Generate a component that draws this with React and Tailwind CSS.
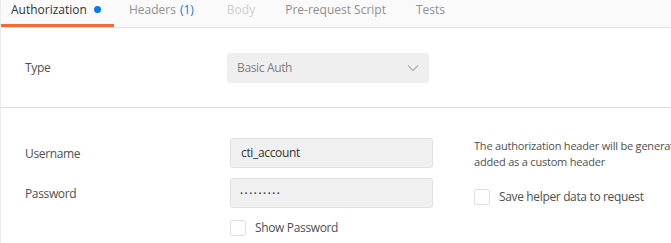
import React from 'react';

const font = { fontFamily: '"Open Sans", "Liberation Sans", sans-serif' };

const Tabs = () => (
    <div className="flex h-[28px] bg-[#fafafa] border-b border-[#e2e2e2] text-[12px]">
        <div className="relative flex items-start gap-[7px] pt-[1px] pl-[10px] pr-[13px] text-[#333333]">
            <span>Authorization</span>
            <span className="mt-[5px] w-[7px] h-[7px] rounded-full bg-[#097bed]" />
            <span className="absolute left-0 right-0 bottom-0 h-[3px] bg-[#f26b3a]" />
        </div>
        <div className="flex items-start gap-[4px] pt-[1px] px-[15px] text-[#909090]">
            <span>Headers</span>
            <span className="text-[#097bed]">(1)</span>
        </div>
        <div className="flex items-start pt-[1px] px-[15px] ml-[3px] text-[#cfcfcf]">Body</div>
        <div className="flex items-start pt-[1px] px-[15px] text-[#909090]">Pre-request Script</div>
        <div className="flex items-start pt-[1px] px-[15px] text-[#909090]">Tests</div>
    </div>
);

const Checkbox = ({ label }) => (
    <label className="flex items-center gap-[9px] text-[12px] tracking-[-0.35px] text-[#505050]">
        <span className="w-[16px] h-[16px] rounded-[2px] border border-[#e0e0e0] bg-white" />
        {label}
    </label>
);

const App = () => {
    return (
        <div className="w-[671px] h-[243px] bg-white overflow-hidden border-l border-[#ececec]" style={font}>
            <Tabs />

            {/* Type */}
            <div className="flex items-center h-[80px] border-b border-[#dcdcdc] pl-[24px]">
                <div className="w-[202px] text-[12px] tracking-[-0.35px] text-[#505050]">Type</div>
                <div className="flex items-center justify-between w-[202px] h-[30px] rounded-[3px] bg-[#efefef] pl-[10px] pr-[10px] text-[12px] tracking-[-0.35px] text-[#808080]">
                    <span>Basic Auth</span>
                    <svg width="12" height="8" viewBox="0 0 12 8" fill="none">
                        <path d="M1 1.5L6 6.5L11 1.5" stroke="#b0b0b0" strokeWidth="1.2" />
                    </svg>
                </div>
            </div>

            {/* Credentials */}
            <div className="flex pt-[30px] pl-[24px]">
                <div className="flex flex-col">
                    <div className="flex items-center h-[30px]">
                        <div className="w-[205px] pt-[2px] text-[12px] tracking-[-0.35px] text-[#505050]">Username</div>
                        <div className="flex items-center w-[203px] h-[30px] rounded-[3px] border border-[#e0e0e0] bg-[#f0f0f0] px-[10px] text-[12px] tracking-[-0.35px] text-[#333333]">
                            cti_account
                        </div>
                    </div>
                    <div className="flex items-center h-[30px] mt-[10px]">
                        <div className="w-[205px] pt-[2px] text-[12px] tracking-[-0.35px] text-[#505050]">Password</div>
                        <div className="flex items-center w-[203px] h-[30px] rounded-[3px] border border-[#e0e0e0] bg-[#f0f0f0] px-[9px] text-[8px] tracking-[1.6px] text-[#444444]">
                            •••••••••
                        </div>
                    </div>
                    <div className="mt-[11px] ml-[205px]">
                        <Checkbox label="Show Password" />
                    </div>
                </div>
                <div className="flex flex-col ml-[41px] whitespace-nowrap">
                    <p className="text-[11px] leading-[16px] tracking-[-0.2px] text-[#505050]">
                        The authorization header will be generated and
                        <br />
                        added as a custom header
                    </p>
                    <div className="mt-[18px]">
                        <Checkbox label="Save helper data to request" />
                    </div>
                </div>
            </div>
        </div>
    );
};

export default App;
